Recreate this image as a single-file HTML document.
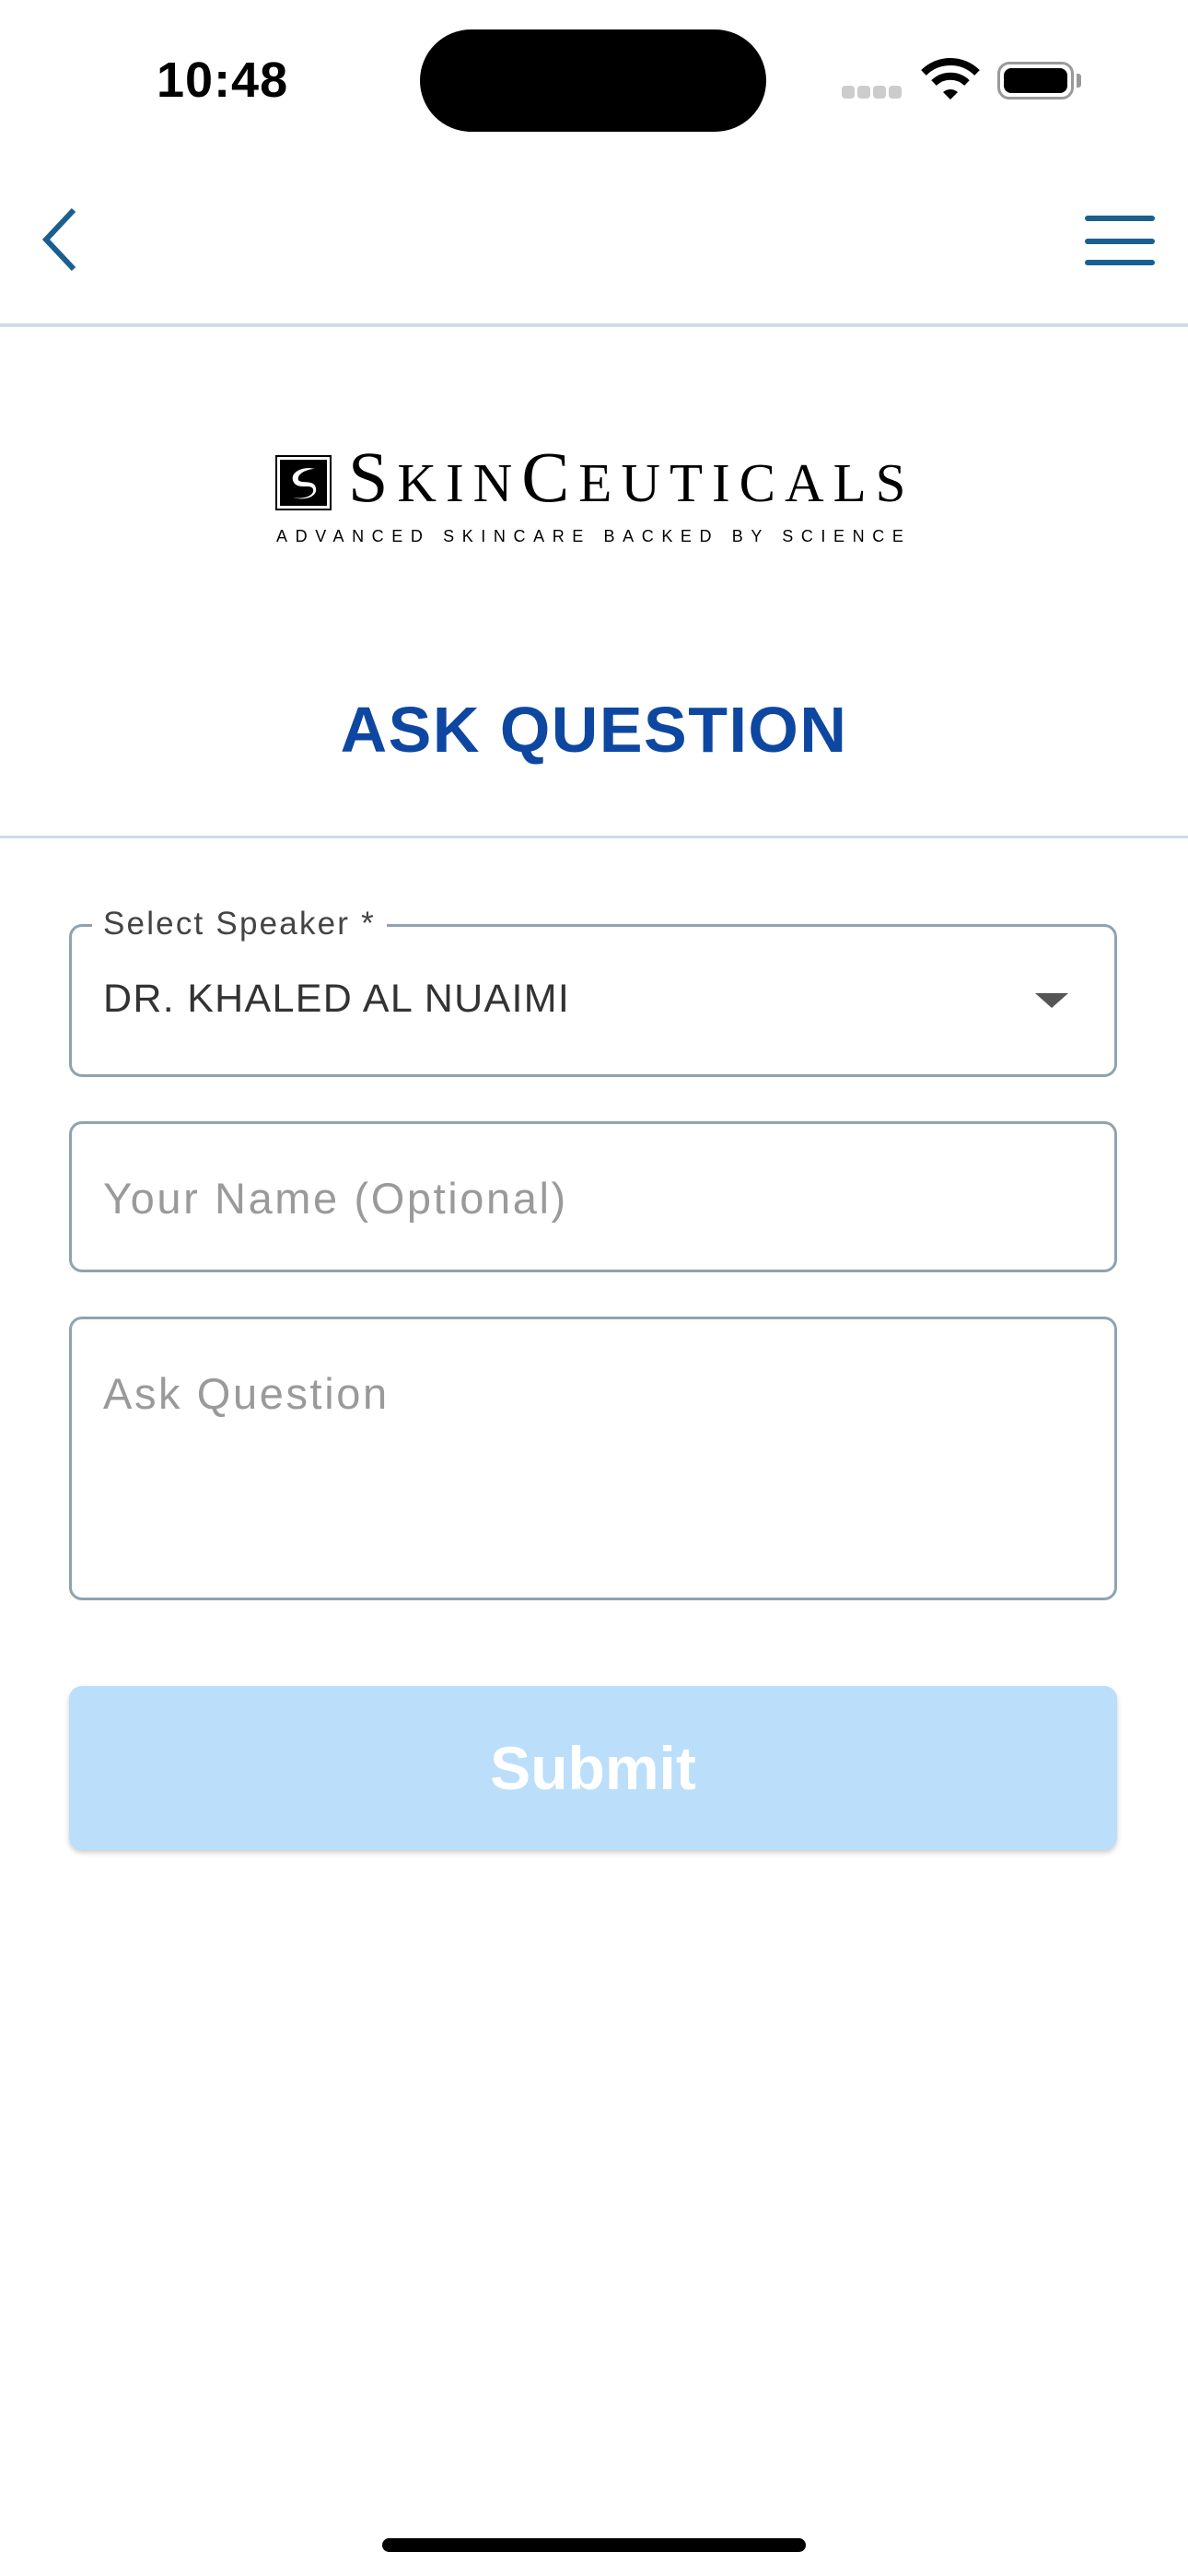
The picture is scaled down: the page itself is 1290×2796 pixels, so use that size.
<!DOCTYPE html>
<html><head><meta charset="utf-8"><style>
*{margin:0;padding:0;box-sizing:border-box}
body{width:1290px;height:2796px;background:#fff;position:relative;overflow:hidden;font-family:"Liberation Sans",sans-serif}
.a{position:absolute}
.field{position:absolute;left:75px;width:1138px;border:3px solid #8fa3b0;border-radius:14px}
.ph{position:absolute;left:112px;font-size:47px;color:#9a9a9a;letter-spacing:2.6px}
</style></head><body>
<div class="a" style="left:170px;top:56px;font-size:54px;font-weight:bold;color:#000;letter-spacing:1px">10:48</div>
<div class="a" style="left:456px;top:32px;width:376px;height:111px;background:#000;border-radius:56px"></div>
<div class="a" style="left:914px;top:93px;width:14px;height:14px;border-radius:4px;background:#ccc"></div>
<div class="a" style="left:931px;top:93px;width:14px;height:14px;border-radius:4px;background:#ccc"></div>
<div class="a" style="left:948px;top:93px;width:14px;height:14px;border-radius:4px;background:#ccc"></div>
<div class="a" style="left:965px;top:93px;width:14px;height:14px;border-radius:4px;background:#ccc"></div>
<svg class="a" style="left:1000px;top:62px" width="64" height="48" viewBox="0 0 64 48"><path d="M32 46 L24 38 A12 12 0 0 1 40 38 Z" fill="#000"/><path d="M14 28 A26 26 0 0 1 50 28" stroke="#000" stroke-width="8" fill="none"/><path d="M3 17 A41 41 0 0 1 61 17" stroke="#000" stroke-width="8" fill="none"/></svg>
<div class="a" style="left:1083px;top:67px;width:83px;height:41px;border:3px solid #999;border-radius:13px;padding:4px"><div style="width:100%;height:100%;background:#000;border-radius:8px"></div></div>
<div class="a" style="left:1169px;top:80px;width:5px;height:15px;background:#999;border-radius:0 3px 3px 0"></div>
<svg class="a" style="left:40px;top:224px" width="50" height="72"><path d="M40 4 L10 36 L40 68" stroke="#1a5f8f" stroke-width="6" fill="none"/></svg>
<div class="a" style="left:1178px;top:234px;width:76px;height:6px;background:#1a5f8f;border-radius:3px"></div>
<div class="a" style="left:1178px;top:259px;width:76px;height:6px;background:#1a5f8f;border-radius:3px"></div>
<div class="a" style="left:1178px;top:282px;width:76px;height:6px;background:#1a5f8f;border-radius:3px"></div>
<div class="a" style="left:0;top:351px;width:1290px;height:4px;background:#d0dbe2"></div>
<div class="a" style="left:299px;top:494px;width:61px;height:60px;border:2px solid #000;padding:3px"><div style="width:100%;height:100%;background:#000;position:relative"><svg width="51" height="50" viewBox="0 0 51 50" class="a" style="left:0;top:0"><path d="M38 10 C22 6 8 16 16 26 C22 32 34 26 36 32 C38 40 22 44 12 40 C26 46 44 40 38 28 C34 22 22 26 20 22 C18 16 28 10 38 10Z" fill="#fff"/></svg></div></div>
<div class="a" style="left:378px;top:478px;font-family:'Liberation Serif',serif;font-size:78px;color:#000;letter-spacing:10px;line-height:80px;white-space:nowrap">S<span style="font-size:59px">KIN</span>C<span style="font-size:59px">EUTICALS</span></div>
<div class="a" style="left:300px;top:572px;font-size:18px;color:#000;letter-spacing:8.6px;white-space:nowrap">ADVANCED SKINCARE BACKED BY SCIENCE</div>
<div class="a" style="left:0;top:752px;width:1290px;text-align:center;font-size:70px;font-weight:bold;color:#0d47a1;letter-spacing:1.5px">ASK QUESTION</div>
<div class="a" style="left:0;top:907px;width:1290px;height:3px;background:#d0dbe2"></div>
<div class="field" style="top:1003px;height:166px"></div>
<div class="a" style="left:100px;top:983px;padding:0 12px;background:#fff;font-size:35px;color:#444;letter-spacing:2.2px">Select Speaker *</div>
<div class="a" style="left:112px;top:1060px;font-size:43px;color:#333;letter-spacing:1.3px">DR. KHALED AL NUAIMI</div>
<svg class="a" style="left:1124px;top:1078px" width="36" height="16"><path d="M0 0 L36 0 L18 16Z" fill="#555"/></svg>
<div class="field" style="top:1217px;height:164px"></div>
<div class="ph" style="top:1273px">Your Name (Optional)</div>
<div class="field" style="top:1429px;height:308px"></div>
<div class="ph" style="top:1485px">Ask Question</div>
<div class="a" style="left:75px;top:1830px;width:1138px;height:178px;background:#bbdefa;border-radius:14px;box-shadow:0 3px 6px rgba(0,0,0,.2);color:#fff;font-size:66px;font-weight:bold;text-align:center;line-height:178px">Submit</div>
<div class="a" style="left:415px;top:2755px;width:460px;height:15px;background:#000;border-radius:8px"></div>
</body></html>
